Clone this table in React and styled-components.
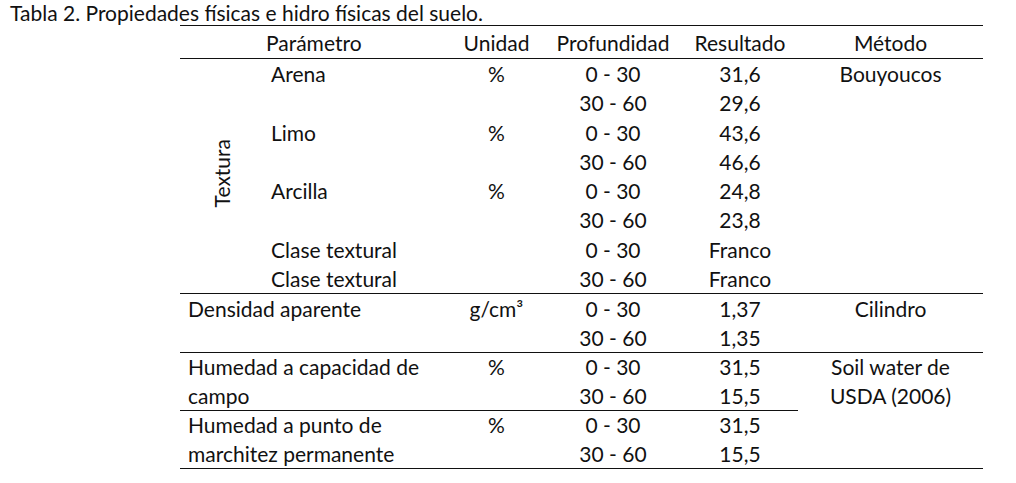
import styled, { createGlobalStyle } from 'styled-components';

const GlobalStyle = createGlobalStyle`
  html, body {
    margin: 0;
    padding: 0;
    background: #fff;
  }
  body {
    font-family: Lato, "Open Sans", sans-serif;
    color: #111;
  }
`;

const Page = styled.div`
  width: 1016px;
  height: 483px;
  overflow: hidden;
`;

const Caption = styled.div`
  font-size: 21px;
  line-height: 25px;
  height: 25px;
  padding-left: 10px;
  white-space: nowrap;
`;

const Table = styled.table`
  margin-left: 180px;
  width: 803px;
  border-collapse: collapse;
  table-layout: fixed;
  font-size: 21px;
`;

const Head = styled.th`
  font-weight: normal;
  height: 32px;
  padding: 0 0 0 ${({ $pad }) => $pad || 0}px;
  text-align: ${({ $align }) => $align || 'center'};
  vertical-align: middle;
  border-top: 1px solid #111;
  border-bottom: 1px solid #111;
  white-space: nowrap;
`;

const Row = styled.tr`
  border-bottom: ${({ $line }) => ($line ? '1px solid #111' : 'none')};
  line-height: ${({ $h }) => $h || 29.3}px;
`;

const Cell = styled.td`
  padding: 0 0 0 ${({ $pad }) => $pad || 0}px;
  vertical-align: top;
  text-align: ${({ $align }) => $align || 'center'};
  white-space: nowrap;
  border-bottom: ${({ $line }) => ($line ? '1px solid #111' : 'none')};
`;

const SideCell = styled.td`
  padding: 0;
  vertical-align: middle;
  text-align: center;
  border-bottom: 1px solid #111;
`;

const Rotated = styled.span`
  display: inline-block;
  writing-mode: vertical-rl;
  transform: rotate(180deg);
  line-height: 20px;
`;

const texture = [
  { name: 'Arena', unit: '%', values: ['31,6', '29,6'] },
  { name: 'Limo', unit: '%', values: ['43,6', '46,6'] },
  { name: 'Arcilla', unit: '%', values: ['24,8', '23,8'] },
];

export default function App() {
  return (
    <Page>
      <GlobalStyle />
      <Caption>Tabla 2. Propiedades físicas e hidro físicas del suelo.</Caption>
      <Table>
        <colgroup>
          <col style={{ width: 83 }} />
          <col style={{ width: 186 }} />
          <col style={{ width: 95 }} />
          <col style={{ width: 138 }} />
          <col style={{ width: 116 }} />
          <col style={{ width: 185 }} />
        </colgroup>
        <thead>
          <tr>
            <Head />
            <Head $align="left" $pad={3}>Parámetro</Head>
            <Head>Unidad</Head>
            <Head>Profundidad</Head>
            <Head>Resultado</Head>
            <Head>Método</Head>
          </tr>
        </thead>
        <tbody>
          {texture.map((t, i) => [
            <Row key={t.name + 'a'}>
              {i === 0 && (
                <SideCell rowSpan={8}>
                  <Rotated>Textura</Rotated>
                </SideCell>
              )}
              <Cell rowSpan={2} $align="left" $pad={8}>{t.name}</Cell>
              <Cell rowSpan={2}>{t.unit}</Cell>
              <Cell>0 - 30</Cell>
              <Cell>{t.values[0]}</Cell>
              {i === 0 && <Cell rowSpan={8} $line>Bouyoucos</Cell>}
            </Row>,
            <Row key={t.name + 'b'}>
              <Cell>30 - 60</Cell>
              <Cell>{t.values[1]}</Cell>
            </Row>,
          ])}
          <Row>
            <Cell $align="left" $pad={8}>Clase textural</Cell>
            <Cell />
            <Cell>0 - 30</Cell>
            <Cell>Franco</Cell>
          </Row>
          <Row $line>
            <Cell $align="left" $pad={8}>Clase textural</Cell>
            <Cell />
            <Cell>30 - 60</Cell>
            <Cell>Franco</Cell>
          </Row>

          <Row $h={29}>
            <Cell colSpan={2} rowSpan={2} $align="left" $pad={8}>Densidad aparente</Cell>
            <Cell rowSpan={2}>g/cm³</Cell>
            <Cell>0 - 30</Cell>
            <Cell>1,37</Cell>
            <Cell rowSpan={2}>Cilindro</Cell>
          </Row>
          <Row $line $h={29}>
            <Cell>30 - 60</Cell>
            <Cell>1,35</Cell>
          </Row>

          <Row $h={28.5}>
            <Cell colSpan={2} rowSpan={2} $align="left" $pad={8}>
              Humedad a capacidad de<br />campo
            </Cell>
            <Cell rowSpan={2}>%</Cell>
            <Cell>0 - 30</Cell>
            <Cell>31,5</Cell>
            <Cell rowSpan={4} $line>
              Soil water de<br />USDA (2006)
            </Cell>
          </Row>
          <Row $line $h={28.5}>
            <Cell>30 - 60</Cell>
            <Cell>15,5</Cell>
          </Row>

          <Row $h={28.5}>
            <Cell colSpan={2} rowSpan={2} $align="left" $pad={8}>
              Humedad a punto de<br />marchitez permanente
            </Cell>
            <Cell rowSpan={2}>%</Cell>
            <Cell>0 - 30</Cell>
            <Cell>31,5</Cell>
          </Row>
          <Row $line $h={28.5}>
            <Cell>30 - 60</Cell>
            <Cell>15,5</Cell>
          </Row>
        </tbody>
      </Table>
    </Page>
  );
}
